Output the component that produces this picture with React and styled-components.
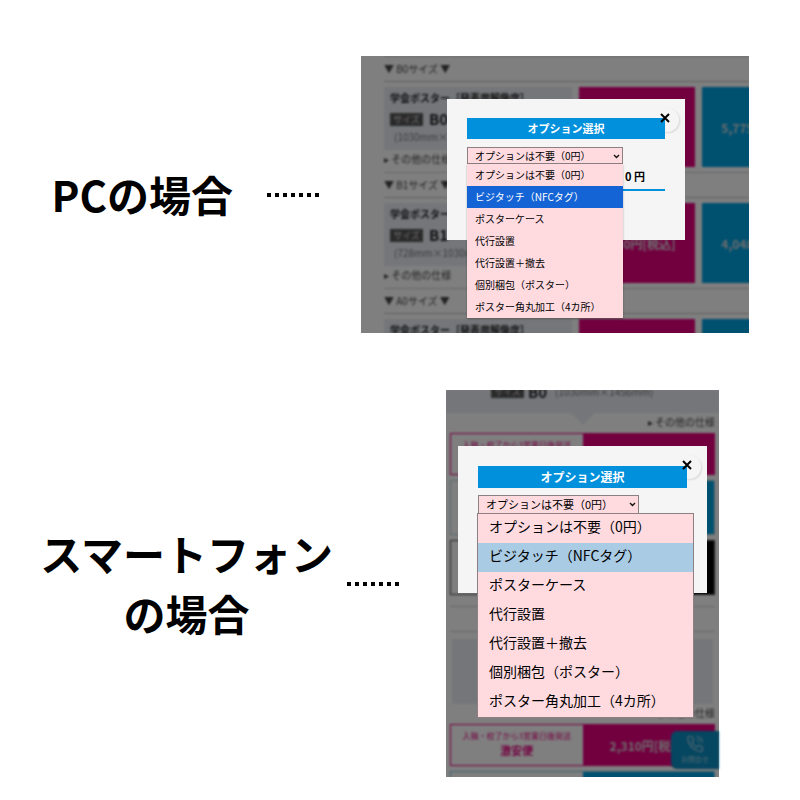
import React from 'react'
import styled, { createGlobalStyle } from 'styled-components';

const GlobalStyle = createGlobalStyle`
  * {
    box-sizing: border-box;
    margin: 0;
    padding: 0;
  }
  body {
    background: #fff;
    color: #000;
    font-family: 'Noto Sans CJK JP', 'Noto Sans', sans-serif;
  }
  button, select {
    font: inherit;
    color: inherit;
  }
`;

const Main = styled.main`
  display: flex;
  flex-direction: column;
  gap: 57px;
  padding: 56px 0 23px;
  overflow: hidden;
`;

const Example = styled.section`
  display: flex;
  justify-content: flex-end;
  align-items: center;
`;

const ExampleTitle = styled.h1`
  padding-bottom: 2px;
  font-size: 42px;
  line-height: 60px;
  font-weight: 700;
  text-align: center;
  white-space: pre-line;
`;

const Dots = styled.div`
  flex: none;
  width: 52px;
  height: 4px;
  margin: 0 ${({ $right }) => $right}px 0 ${({ $left }) => $left}px;
  background: repeating-linear-gradient(90deg, #000 0 4px, transparent 4px 8px);
`;

const Screen = styled.div`
  position: relative;
  flex: none;
  width: ${({ $width }) => $width};
  height: ${({ $height }) => $height}px;
  margin-right: ${({ $right }) => $right}px;
  background: #fff;
`;

const Clip = styled.div`
  height: 100%;
  overflow: hidden;
`;

const Backdrop = styled.div`
  position: absolute;
  inset: 0;
  background: rgba(0, 0, 0, 0.5);
`;

/* shop page behind the dialog */

const Shop = styled.div`
  filter: blur(1px);
  padding: ${({ $phone }) => ($phone ? '0 4px' : '0 0 0 23px')};
  color: #444;
  font-size: 10px;
  white-space: nowrap;
`;

const SizeHeading = styled.h3`
  height: 26px;
  line-height: 24px;
  font-size: 10px;
  font-weight: 400;
  border-top: 1px solid #ccc;
  border-bottom: 1px solid #bbb;
`;

const Product = styled.div`
  display: grid;
  grid-template-columns: 188px 116px 116px;
  gap: 7px;
  height: 90px;
  padding: 5px 0;
`;

const Info = styled.div`
  display: flex;
  flex-direction: column;
`;

const InfoBox = styled.div`
  height: 63px;
  padding: 2px 6px;
  background: #e9edf4;
`;

const InfoTitle = styled.h4`
  font-size: 10px;
  line-height: 18px;
  color: #222;
`;

const SizeLine = styled.div`
  display: flex;
  align-items: center;
  gap: 6px;
  height: 24px;
`;

const Badge = styled.span`
  width: 33px;
  background: #555;
  color: #ddd;
  font-size: 9px;
  line-height: 13px;
  text-align: center;
`;

const SizeName = styled.strong`
  font-size: 15px;
  line-height: 20px;
  color: #222;
`;

const Dimensions = styled.p`
  padding-left: 4px;
  font-size: 10px;
  line-height: 12px;
  color: #777;
`;

const More = styled.a`
  color: #444;
  font-size: 10px;
  line-height: 17px;
  text-decoration: none;
`;

const Price = styled.div`
  display: flex;
  align-items: center;
  justify-content: center;
  background: ${({ $color }) => $color};
  color: #ddd;
  font-size: 12px;
  font-weight: 700;
`;

const PhoneSizeLine = styled.div`
  position: relative;
  display: flex;
  align-items: center;
  gap: 4px;
  height: 23px;
  margin: 0 -4px;
  padding: 0 0 20px 45px;
  background: #e9edf4;

  &::after {
    content: '';
    position: absolute;
    top: 100%;
    left: 50%;
    border: 12px solid transparent;
    border-top-color: #e9edf4;
    border-bottom: 0;
    transform: translateX(-50%);
  }
`;

const PhoneMore = styled.div`
  display: flex;
  justify-content: flex-end;
  height: 20px;
`;

const Plan = styled.div`
  display: grid;
  grid-template-columns: 1fr 1fr;
  height: ${({ $height }) => $height}px;
  margin-bottom: 5px;
  border: 1px solid ${({ $line, $color }) => $line || $color};
  color: ${({ $color }) => $color};
`;

const PlanName = styled.div`
  padding-top: 3px;
  font-size: 8px;
  line-height: 16px;
  text-align: center;
`;

const PlanSpeed = styled.strong`
  display: block;
  font-size: 11px;
  line-height: 12px;
`;

const Rule = styled.hr`
  border: 0;
  border-top: 1px solid #ccc;
  margin-top: ${({ $top }) => $top}px;
`;

const PhoneInfo = styled.div`
  height: 65px;
  margin: 7px 2px 0;
  background: #e9edf4;
`;

const Contact = styled.a`
  position: absolute;
  right: 0;
  bottom: 8px;
  display: flex;
  flex-direction: column;
  align-items: center;
  justify-content: center;
  width: 48px;
  height: 38px;
  border-radius: 6px 0 0 6px;
  background: #0b8cc0;
  color: #a9d4e8;
  font-size: 7px;
  line-height: 12px;
  text-decoration: none;
  filter: blur(1px);
`;

/* option dialog */

const Dialog = styled.div`
  position: absolute;
  top: ${({ $phone }) => ($phone ? 56 : 43)}px;
  left: ${({ $phone }) => ($phone ? 12 : 86)}px;
  right: ${({ $phone }) => ($phone ? 12 : 64)}px;
  min-height: ${({ $phone }) => ($phone ? 147 : 141)}px;
  padding: 20px;
  padding-top: ${({ $phone }) => ($phone ? 20 : 19)}px;
  background: #f5f5f5;
  font-size: ${({ $phone }) => ($phone ? 11 : 10)}px;

  &::before {
    content: '';
    position: absolute;
    top: 9px;
    right: 6px;
    width: 24px;
    height: 24px;
    border-radius: 50%;
    background: #f5f5f5;
    box-shadow: 1px 1px 2px rgba(0, 0, 0, 0.12);
  }
`;

const Close = styled.button`
  position: absolute;
  top: 10px;
  right: 11px;
  z-index: 2;
  display: flex;
  align-items: center;
  justify-content: center;
  width: 18px;
  height: 18px;
  border: 0;
  background: none;
`;

const DialogTitle = styled.h2`
  position: relative;
  background: #0090dc;
  color: #fff;
  font-size: ${({ $phone }) => ($phone ? 12 : 11)}px;
  line-height: ${({ $phone }) => ($phone ? 22 : 21)}px;
  text-align: center;
`;

const Picker = styled.div`
  position: relative;
  width: ${({ $phone }) => ($phone ? 161 : 156)}px;
  margin-top: ${({ $phone }) => ($phone ? 7 : 8)}px;

  svg {
    position: absolute;
    top: 7px;
    right: 3px;
    pointer-events: none;
  }
`;

const Select = styled.select`
  display: block;
  width: 100%;
  height: ${({ $phone }) => ($phone ? 19 : 17)}px;
  padding: 0 7px;
  appearance: none;
  border: 1px solid #8c8084;
  border-radius: 0;
  background: #ffdbe0;
  line-height: 15px;
`;

const Options = styled.ul`
  position: absolute;
  top: ${({ $phone }) => ($phone ? 19 : 17)}px;
  left: 0;
  z-index: 3;
  width: ${({ $phone }) => ($phone ? 215 : 156)}px;
  background: #ffdbe0;
  box-shadow: ${({ $phone }) => ($phone ? '0 0 0 1px #8c8084' : '0 1px 2px rgba(0, 0, 0, 0.3)')};
  list-style: none;
`;

const Option = styled.li`
  padding: ${({ $phone }) => ($phone ? '0 0 4px 11px' : '0 0 0 8px')};
  font-size: ${({ $phone }) => ($phone ? 14 : 10)}px;
  line-height: ${({ $phone }) => ($phone ? 25 : 22)}px;
  white-space: nowrap;

  &[aria-selected='true'] {
    background: ${({ $phone }) => ($phone ? '#a9cbe4' : '#1464d6')};
    color: ${({ $phone }) => ($phone ? '#000' : '#fff')};
  }
`;

const Total = styled.p`
  padding-right: 20px;
  border-bottom: 2px solid #0090dc;
  font-size: 11px;
  line-height: 25px;
  font-weight: 700;
  text-align: right;
`;

const PINK = '#e4007f';
const BLUE = '#00a0e0';

const options = [
  'オプションは不要（0円）',
  'ビジタッチ（NFCタグ）',
  'ポスターケース',
  '代行設置',
  '代行設置＋撤去',
  '個別梱包（ポスター）',
  'ポスター角丸加工（4カ所）',
];

const products = [
  { size: 'B0', dimensions: '(1030mm×1456mm)', pink: '8,250円[税込]', blue: '5,775円[税込]' },
  { size: 'B1', dimensions: '(728mm×1030mm)', pink: '5,830円[税込]', blue: '4,048円[税込]' },
  { size: 'A0', dimensions: '(841mm×1189mm)', pink: '', blue: '' },
];

function OptionDialog({ id, phone, total }) {
  return (
    <Dialog $phone={phone} role="dialog" aria-labelledby={id}>
      <Close type="button" aria-label="閉じる">
        <svg width="10" height="10" viewBox="0 0 10 10" stroke="#000" strokeWidth="2">
          <path d="M1 1l8 8M9 1L1 9" />
        </svg>
      </Close>
      <DialogTitle $phone={phone} id={id}>オプション選択</DialogTitle>
      <Picker $phone={phone}>
        <Select $phone={phone} aria-labelledby={id} defaultValue={options[0]}>
          {options.map((name) => <option key={name}>{name}</option>)}
        </Select>
        <svg width="7" height="5" viewBox="0 0 7 5" fill="none" stroke="#111" strokeWidth="1.4">
          <path d="M1 1l2.5 2.5L6 1" />
        </svg>
        <Options $phone={phone} role="listbox" aria-labelledby={id}>
          {options.map((name, i) => (
            <Option key={name} $phone={phone} role="option" aria-selected={i === 1}>{name}</Option>
          ))}
        </Options>
      </Picker>
      {total && <Total>{total}</Total>}
    </Dialog>
  )
}

function PcShop() {
  return (
    <Shop>
      {products.map(({ size, dimensions, pink, blue }) => (
        <React.Fragment key={size}>
          <SizeHeading>▼ {size}サイズ ▼</SizeHeading>
          <Product>
            <Info>
              <InfoBox>
                <InfoTitle>学会ポスター［発表用解像度］</InfoTitle>
                <SizeLine>
                  <Badge>サイズ</Badge>
                  <SizeName>{size}</SizeName>
                </SizeLine>
                <Dimensions>{dimensions}</Dimensions>
              </InfoBox>
              <More href="#">▸ その他の仕様</More>
            </Info>
            <Price $color={PINK}>{pink}</Price>
            <Price $color={BLUE}>{blue}</Price>
          </Product>
        </React.Fragment>
      ))}
    </Shop>
  )
}

function PhoneShop() {
  return (
    <Shop $phone>
      <PhoneSizeLine>
        <Badge>サイズ</Badge>
        <SizeName>B0</SizeName>
        <Dimensions>(1030mm×1456mm)</Dimensions>
      </PhoneSizeLine>
      <PhoneMore><More href="#">▸ その他の仕様</More></PhoneMore>
      <Plan $color={PINK} $height={42}>
        <PlanName>入稿・校了から3営業日後発送</PlanName>
        <Price $color={PINK} />
      </Plan>
      <Plan $color={BLUE} $line="#b4d2dc" $height={55}>
        <PlanName />
        <Price $color={BLUE} />
      </Plan>
      <Plan $color="#000" $line="#444" $height={55}>
        <PlanName />
        <Price $color="#000" />
      </Plan>
      <Rule $top={11} />
      <Rule $top={24} />
      <PhoneInfo />
      <PhoneMore><More href="#">▸ その他の仕様</More></PhoneMore>
      <Plan $color={PINK} $height={42}>
        <PlanName>
          入稿・校了から3営業日後発送
          <PlanSpeed>激安便</PlanSpeed>
        </PlanName>
        <Price $color={PINK}>2,310円[税込]</Price>
      </Plan>
      <Plan $color={BLUE} $line="#7cc4dc" $height={42}>
        <PlanName />
        <Price $color={BLUE} />
      </Plan>
    </Shop>
  )
}

function App() {
  return (
    <>
      <GlobalStyle />
      <Main>
        <Example>
          <ExampleTitle>PCの場合</ExampleTitle>
          <Dots $left={34} $right={42} />
          <Screen $width="48.5%" $height={277} $right={51}>
            <Clip><PcShop /></Clip>
            <Backdrop />
            <OptionDialog id="pc-option" total="0 円" />
          </Screen>
        </Example>
        <Example>
          <ExampleTitle>{'スマートフォン\nの場合'}</ExampleTitle>
          <Dots $left={14} $right={47} />
          <Screen $width="34.125%" $height={387} $right={81}>
            <Clip>
              <PhoneShop />
              <Contact href="#">
                <svg width="18" height="18" viewBox="0 0 24 24" fill="none" stroke="currentColor" strokeWidth="1.6">
                  <path d="M22 16.9v3a2 2 0 0 1-2.2 2 19.8 19.8 0 0 1-8.6-3 19.5 19.5 0 0 1-6-6 19.8 19.8 0 0 1-3.1-8.7A2 2 0 0 1 4.1 2h3a2 2 0 0 1 2 1.7c.1 1 .4 1.9.7 2.8a2 2 0 0 1-.4 2.1L8.1 9.9a16 16 0 0 0 6 6l1.3-1.3a2 2 0 0 1 2.1-.4c.9.3 1.8.6 2.8.7a2 2 0 0 1 1.7 2z" />
                  <path d="M14 2a9 9 0 0 1 8 8M14 6a5 5 0 0 1 4 4" />
                </svg>
                お問合せ
              </Contact>
            </Clip>
            <Backdrop />
            <OptionDialog id="phone-option" phone />
          </Screen>
        </Example>
      </Main>
    </>
  )
}

export default App
